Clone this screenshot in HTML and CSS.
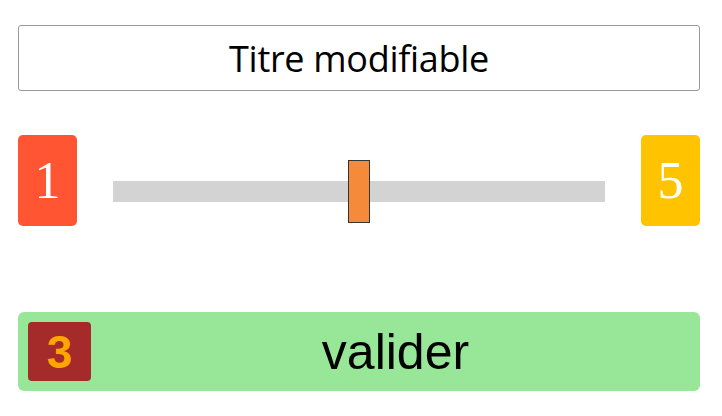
FILE: index.html
```html
<!DOCTYPE html>
<html>
<head>
  <link rel="stylesheet" href="styles.css">
</head>
<body>
  <div class="panel">
    <div class="title">Titre modifiable</div>

    <div class="range-row">
      <div class="bound min">1</div>
      <div class="slider">
        <div class="track"></div>
        <div class="thumb" style="left: 50%"></div>
      </div>
      <div class="bound max">5</div>
    </div>

    <div class="submit">
      <div class="value">3</div>
      <div class="submit-label">valider</div>
    </div>
  </div>
</body>
</html>
```

FILE: styles.css
```css
body {
  margin: 0;
  background: #fff;
  font-family: "Liberation Sans", Arial, sans-serif;
}

.panel {
  width: 682px;
  padding: 25px 0 0 18px;
}

.title {
  height: 64px;
  border: 1px solid #999;
  border-radius: 3px;
  display: flex;
  justify-content: center;
  align-items: center;
  font-family: "Open Sans", sans-serif;
  font-size: 36px;
  letter-spacing: -0.3px;
  color: #000;
}

.range-row {
  display: flex;
  align-items: flex-start;
  margin-top: 44px;
}

.bound {
  width: 59px;
  height: 91px;
  border-radius: 5px;
  display: flex;
  justify-content: center;
  align-items: center;
  color: #fff;
  font-family: "Liberation Serif", "Times New Roman", serif;
  font-size: 52px;
  line-height: 1;
}

.bound.min { background: #ff5533; }
.bound.max { background: #ffc300; }

.slider {
  flex: 1;
  position: relative;
  margin: 46px 36px 0;
  height: 21px;
}

.track {
  height: 100%;
  background: #d3d3d3;
}

.thumb {
  position: absolute;
  top: -21px;
  width: 20px;
  height: 61px;
  margin-left: -11px;
  background: #f58a3a;
  border: 1px solid #333;
}

.submit {
  margin-top: 86px;
  height: 79px;
  background: #98e698;
  border-radius: 6px;
  display: flex;
  align-items: center;
  padding-left: 10px;
}

.value {
  width: 63px;
  height: 59px;
  border-radius: 4px;
  background: #a52a2a;
  color: #ffa500;
  font-weight: bold;
  font-size: 46px;
  line-height: 1;
  display: flex;
  justify-content: center;
  align-items: center;
}

.submit-label {
  flex: 1;
  text-align: center;
  font-size: 50px;
  line-height: 1;
  color: #000;
}
```
